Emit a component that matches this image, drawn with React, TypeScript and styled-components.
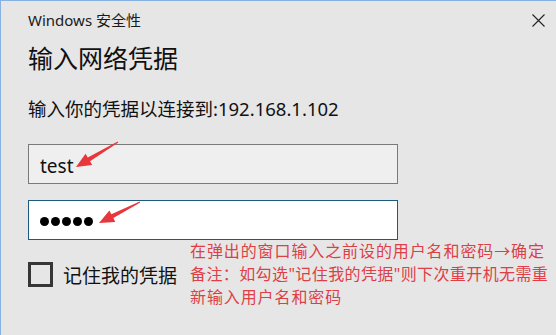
import React from "react";
import styled, { createGlobalStyle } from "styled-components";

const GlobalStyle = createGlobalStyle`
  html, body { margin: 0; padding: 0; background: #e6e6e6; }
  * { box-sizing: border-box; }
`;

const FONT = `"Noto Sans", "Noto Sans CJK SC", sans-serif`;

const Window = styled.div`
  position: relative;
  width: 556px;
  height: 335px;
  overflow: hidden;
  background: #e6e6e6;
  border-top: 1px solid #86b1e0;
  border-left: 1px solid #86b1e0;
  font-family: ${FONT};
  color: #111;
  display: flex;
  flex-direction: column;
`;

const TitleBar = styled.div`
  height: 36px;
  display: flex;
  align-items: center;
  justify-content: space-between;
  padding: 0 11px 0 27px;
`;

const TitleText = styled.span`
  font-size: 15px;
  color: #1a1a1a;
`;

const CloseButton = styled.button`
  width: 13px;
  height: 13px;
  padding: 0;
  border: none;
  background: none;
  display: flex;
  margin-top: 2px;
`;

const Content = styled.div`
  padding-left: 27px;
  display: flex;
  flex-direction: column;
`;

const Heading = styled.h1`
  margin: 4px 0 0;
  font-size: 25px;
  line-height: 34px;
  font-weight: 400;
  color: #111;
`;

const Subtitle = styled.p`
  margin: 21px 0 0;
  font-size: 18.5px;
  line-height: 26px;
  color: #111;
`;

const Field = styled.div<{ $focused?: boolean }>`
  position: relative;
  width: 370px;
  height: 40px;
  margin-top: ${(p) => (p.$focused ? "16px" : "22px")};
  border: 1px solid ${(p) => (p.$focused ? "#1d5b7e" : "#7a7a7a")};
  background: ${(p) => (p.$focused ? "#ffffff" : "#efefef")};
  display: flex;
  align-items: center;
  padding-left: 11px;
  padding-top: 3px;
  font-size: 19px;
  color: #111;
`;

const Dots = styled.div`
  display: flex;
  gap: 2px;
`;

const Dot = styled.span`
  width: 9px;
  height: 9px;
  border-radius: 50%;
  background: #000;
`;

const ArrowSvg = styled.svg`
  position: absolute;
  left: 0;
  top: 0;
  overflow: visible;
  pointer-events: none;
`;

const BottomRow = styled.div`
  display: flex;
  align-items: center;
  height: 69px;
`;

const CheckBox = styled.span`
  width: 25px;
  height: 25px;
  border: 3px solid #363636;
  background: #e6e6e6;
  flex: none;
`;

const CheckLabel = styled.span`
  margin-left: 10px;
  font-size: 19px;
  color: #111;
  white-space: nowrap;
`;

const Note = styled.div`
  margin-left: 13px;
  font-size: 16px;
  line-height: 23px;
  color: #de3f47;
  white-space: nowrap;
`;

const NoteLine = styled.div<{ $tracking?: number }>`
  letter-spacing: ${(p) => p.$tracking ?? 0.9}px;
`;

function Arrow({ tail, tip }: { tail: [number, number]; tip: [number, number] }) {
  const [tx, ty] = tail;
  const [px, py] = tip;
  const dx = px - tx;
  const dy = py - ty;
  const len = Math.hypot(dx, dy);
  const ux = dx / len;
  const uy = dy / len;
  const nx = -uy;
  const ny = ux;
  const headLen = 15;
  const headHalf = 6.5;
  const bx = px - ux * headLen;
  const by = py - uy * headLen;
  const pts: [number, number][] = [
    [tx + nx * 0.6, ty + ny * 0.6],
    [bx + nx * 2.2, by + ny * 2.2],
    [bx + nx * headHalf, by + ny * headHalf],
    [px, py],
    [bx - nx * headHalf, by - ny * headHalf],
    [bx - nx * 2.2, by - ny * 2.2],
    [tx - nx * 0.6, ty - ny * 0.6],
  ];
  return (
    <ArrowSvg width="1" height="1">
      <polygon points={pts.map((p) => p.join(",")).join(" ")} fill="#e8373c" />
    </ArrowSvg>
  );
}

export default function App() {
  return (
    <>
      <GlobalStyle />
      <Window>
        <TitleBar>
          <TitleText>Windows 安全性</TitleText>
          <CloseButton aria-label="关闭">
            <svg width="13" height="13" viewBox="0 0 13 13">
              <path d="M0.5 0.5 L12.5 12.5 M12.5 0.5 L0.5 12.5" stroke="#222" strokeWidth="1.1" fill="none" />
            </svg>
          </CloseButton>
        </TitleBar>
        <Content>
          <Heading>输入网络凭据</Heading>
          <Subtitle>输入你的凭据以连接到:192.168.1.102</Subtitle>
          <Field>
            test
            <Arrow tail={[89, -3]} tip={[47, 22]} />
          </Field>
          <Field $focused>
            <Dots>
              <Dot />
              <Dot />
              <Dot />
              <Dot />
              <Dot />
            </Dots>
            <Arrow tail={[111, 1]} tip={[70, 22]} />
          </Field>
          <BottomRow>
            <CheckBox />
            <CheckLabel>记住我的凭据</CheckLabel>
            <Note>
              <NoteLine>在弹出的窗口输入之前设的用户名和密码→确定</NoteLine>
              <NoteLine $tracking={0.4}>备注：如勾选"记住我的凭据"则下次重开机无需重</NoteLine>
              <NoteLine>新输入用户名和密码</NoteLine>
            </Note>
          </BottomRow>
        </Content>
      </Window>
    </>
  );
}
